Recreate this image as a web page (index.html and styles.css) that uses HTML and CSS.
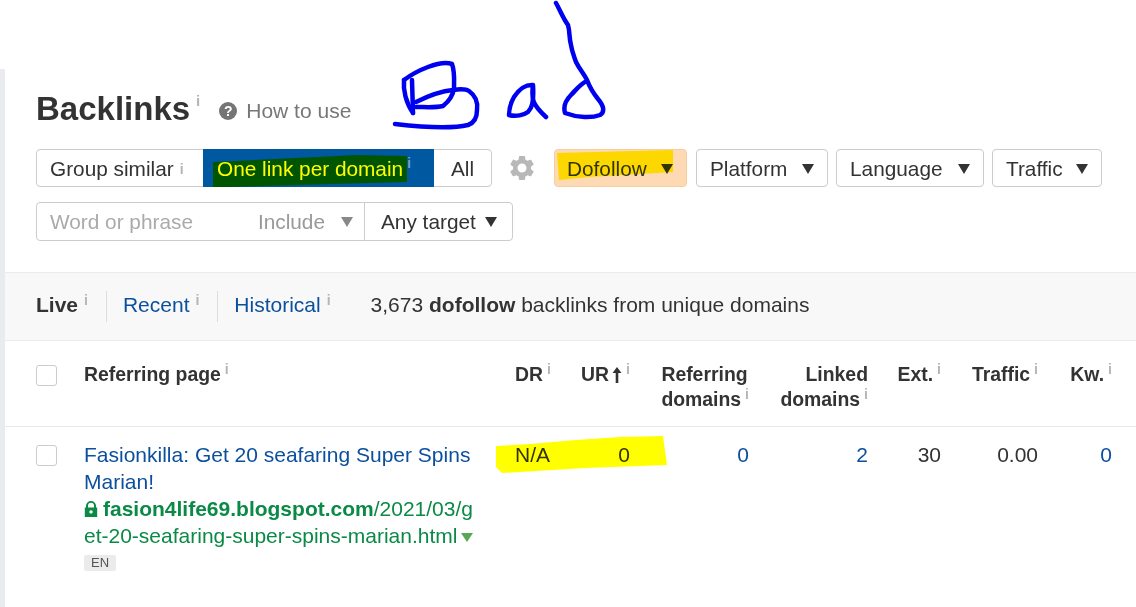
FILE: index.html
```html
<!DOCTYPE html>
<html lang="en">
<head>
<meta charset="utf-8">
<title>Backlinks</title>
<link rel="stylesheet" href="styles.css">
</head>
<body>
<main class="page">
  <header class="head">
    <div class="title-row">
      <h1 class="title">Backlinks</h1><span class="info info-title">i</span>
      <a class="howto"><span class="q">?</span>How to use</a>
    </div>
    <div class="filters">
      <div class="seg">
        <span class="seg-item seg-group">Group similar<span class="info">i</span></span>
        <span class="seg-item seg-active">
          <svg class="green" width="231" height="38" viewBox="0 0 231 38"><polygon points="10,13 154,6 204,7 204,33 26,38 10,38"/></svg>
          <span class="seg-text">One link per domain</span><span class="info info-active">i</span>
        </span>
        <span class="seg-item seg-all">All</span>
      </div>
      <svg class="gear" width="30" height="30" viewBox="0 0 24 24"><path d="M19.14,12.94c0.04-0.3,0.06-0.61,0.06-0.94c0-0.32-0.02-0.64-0.07-0.94l2.03-1.58c0.18-0.14,0.23-0.41,0.12-0.61 l-1.92-3.32c-0.12-0.22-0.37-0.29-0.59-0.22l-2.39,0.96c-0.5-0.38-1.03-0.7-1.62-0.94L14.4,2.81c-0.04-0.24-0.24-0.41-0.48-0.41 h-3.84c-0.24,0-0.43,0.17-0.47,0.41L9.25,5.35C8.66,5.59,8.12,5.92,7.63,6.29L5.24,5.33c-0.22-0.08-0.47,0-0.59,0.22L2.74,8.87 C2.62,9.08,2.66,9.34,2.86,9.48l2.03,1.58C4.84,11.36,4.8,11.69,4.8,12s0.02,0.64,0.07,0.94l-2.03,1.58 c-0.18,0.14-0.23,0.41-0.12,0.61l1.92,3.32c0.12,0.22,0.37,0.29,0.59,0.22l2.39-0.96c0.5,0.38,1.03,0.7,1.62,0.94l0.36,2.54 c0.05,0.24,0.24,0.41,0.48,0.41h3.84c0.24,0,0.44-0.17,0.47-0.41l0.36-2.54c0.59-0.24,1.13-0.56,1.62-0.94l2.39,0.96 c0.22,0.08,0.47,0,0.59-0.22l1.92-3.32c0.12-0.22,0.07-0.47-0.12-0.61L19.14,12.94z M12,15.6c-1.98,0-3.6-1.62-3.6-3.6 s1.62-3.6,3.6-3.6s3.6,1.62,3.6,3.6S13.98,15.6,12,15.6z"/></svg>
      <span class="drop drop-do">Dofollow<i class="tri"></i></span>
      <span class="drop drop-pl">Platform<i class="tri"></i></span>
      <span class="drop drop-la">Language<i class="tri"></i></span>
      <span class="drop drop-tr">Traffic<i class="tri"></i></span>
    </div>
    <div class="search">
      <span class="search-input"><span class="placeholder">Word or phrase</span><span class="include">Include<i class="tri tri-grey"></i></span></span>
      <span class="search-target">Any target<i class="tri tri-near"></i></span>
    </div>
  </header>

  <section class="band">
    <strong class="tab-live">Live<span class="info">i</span></strong>
    <span class="sep"></span>
    <a class="tab">Recent<span class="info">i</span></a>
    <span class="sep"></span>
    <a class="tab">Historical<span class="info">i</span></a>
    <span class="summary">3,673 <b>dofollow</b> backlinks from unique domains</span>
  </section>

  <section class="table">
    <div class="row row-head">
      <span class="cell"><span class="check"></span></span>
      <span class="cell th-page">Referring page<span class="info">i</span></span>
      <span class="cell th-left">DR<span class="info">i</span></span>
      <span class="cell th">UR<svg class="up" width="10" height="16" viewBox="0 0 10 16"><path d="M5 0 9.5 6H6.3V16H3.7V6H.5Z"/></svg><span class="info">i</span></span>
      <span class="cell th th-ref">Referring<br>domains<span class="info">i</span></span>
      <span class="cell th">Linked<br>domains<span class="info">i</span></span>
      <span class="cell th">Ext.<span class="info">i</span></span>
      <span class="cell th">Traffic<span class="info">i</span></span>
      <span class="cell th">Kw.<span class="info">i</span></span>
    </div>
    <div class="row row-body">
      <span class="cell"><span class="check"></span></span>
      <div class="cell page-cell">
        <a class="page-link">Fasionkilla: Get 20 seafaring Super Spins Marian!</a>
        <div class="url"><svg class="lock" width="14" height="16" viewBox="0 0 14 16"><path d="M2 6.5V4.8a5 4.8 0 0 1 10 0V6.5h1.2V16H.8V6.5ZM4 6.5H10V4.8a3 3 0 0 0-6 0ZM7 9.2a1.7 1.7 0 1 0 .01 0Z" fill-rule="evenodd"/></svg><b>fasion4life69.blogspot.com</b>/2021/03/get-20-seafaring-super-spins-marian.html<i class="tri-url"></i></div>
        <span class="lang">EN</span>
      </div>
      <span class="cell td-left">N/A</span>
      <span class="cell td">0</span>
      <a class="cell td link">0</a>
      <a class="cell td link">2</a>
      <span class="cell td">30</span>
      <span class="cell td">0.00</span>
      <a class="cell td link">0</a>
    </div>
  </section>
</main>

<svg class="ink" width="1136" height="607" viewBox="0 0 1136 607">
  <polygon class="marker-gold" points="557,153 673,150 673,172 589,177 559,180"/>
  <polygon class="marker-yellow" points="496,446 530,444 576,440 620,437 663,436 667,465 585,468 502,473 496,467"/>
  <g class="pen">
    <path d="M404 80C412 74 420 70 428 67S446 62 452 64C455 72 454 82 454 88C453 96 448 102 443 106C435 108 425 107 416 107"/>
    <path d="M404 80C403 90 406 103 413 113"/>
    <path d="M412 80 413 113"/>
    <path d="M416 102C428 96 442 91 453 90C460 89 466 89 469 91C476 96 478 103 477 110C477 118 474 123 468 125C455 128 430 128 395 124"/>
    <path d="M532 85C525 85 520 88 514 97C510 104 509 110 509 115C516 117 524 115 528 112C532 108 534 102 533 85C531 100 533 105 546 117"/>
    <path d="M556 3C560 10 563 18 568 25C570 32 569 38 571 45C572 52 574 56 576 62C580 70 584 74 587 80C590 88 594 94 598 99C604 106 605 112 600 115C592 118 578 118 565 113C563 106 566 100 571 95C576 90 580 84 587 81"/>
  </g>
</svg>
</body>
</html>
```
FILE: styles.css
```css
* { box-sizing: border-box; }
html, body { margin: 0; padding: 0; background: #fff; }
body { font-family: "Liberation Sans", Arial, sans-serif; font-size: 21px; color: #333; overflow: hidden; height: 607px; position: relative; }

.page { margin-top: 69px; min-height: 538px; border-left: 5px solid #e9ebee; }
.info { font-size: 14px; color: #b5b5b5; font-weight: 700; vertical-align: 7px; margin-left: 6px; line-height: 0; }

.head { padding: 20px 0 31px 31px; height: 203px; }
.title-row { display: flex; align-items: center; height: 40px; }
.title { margin: 0; font-size: 33px; line-height: 40px; font-weight: 700; color: #333; }
.info-title { font-size: 15px; margin-left: 6px; align-self: flex-start; line-height: 24px; vertical-align: 0; }
.howto { display: flex; align-items: center; margin-left: 19px; color: #777; font-size: 21px; padding-top: 4px; }
.q { width: 18px; height: 18px; border-radius: 50%; background: #757575; color: #fff; font-size: 14px; font-weight: 700; line-height: 18px; text-align: center; margin-right: 9px; }

.filters { display: flex; align-items: center; margin-top: 20px; height: 38px; font-size: 20.8px; }
.seg { display: flex; height: 38px; width: 456px; border: 1px solid #ccc; border-radius: 4px; }
.seg-item { display: flex; align-items: center; height: 100%; padding-top: 1px; }
.seg-group { width: 166px; padding-left: 13px; }
.seg-active { position: relative; width: 231px; height: 38px; margin-top: -1px; padding-left: 14px; padding-top: 2px; background: #0059a0; }
.green { position: absolute; left: 0; top: 0; fill: #005500; }
.seg-text { position: relative; color: #ff0; }
.info-active { position: relative; color: #6ea0c8; margin-left: 4px; margin-top: -12px; }
.seg-all { flex: 1; justify-content: center; }
.gear { fill: #b8b8b8; margin: 0 17px 0 15px; }
.drop { display: flex; align-items: center; justify-content: space-between; height: 38px; padding: 2px 13px 0 12px; border: 1px solid #ccc; border-radius: 4px; margin-right: 8px; }
.drop-do { width: 133px; background: #fdd9b4; border-color: #f8cd9e; margin-right: 9px; }
.drop-pl { width: 132px; padding-left: 13px; }
.drop-la { width: 148px; padding-left: 13px; }
.drop-tr { width: 110px; padding-left: 13px; }
.tri { display: inline-block; width: 0; height: 0; border-style: solid; border-width: 10px 6px 0; border-color: #333 transparent transparent; }
.tri-grey { border-top-color: #888; margin-left: 16px; }
.tri-near { margin-left: 9px; }

.search { display: flex; margin-top: 15px; height: 39px; width: 477px; border: 1px solid #ccc; border-radius: 4px; font-size: 20.8px; }
.search-input { display: flex; align-items: center; justify-content: space-between; width: 328px; padding: 0 11px 0 13px; border-right: 1px solid #ccc; color: #aaa; }
.include { display: flex; align-items: center; color: #999; }
.search-target { display: flex; align-items: center; padding: 0 0 0 16px; }

.band { display: flex; align-items: center; height: 69px; background: #f8f8f8; border-top: 1px solid #ebebeb; border-bottom: 1px solid #ebebeb; padding: 0 0 4px 31px; }
.tab-live { font-weight: 700; }
.tab { color: #0b4f9e; }
.sep { width: 1px; height: 31px; background: #ddd; margin: 4px 16px 0 18px; }
.summary { margin-left: 40px; }
.summary b { font-weight: 700; }

.row { display: grid; grid-template-columns: 48px 431px 40px 75px 119px 119px 73px 97px 74px; padding-left: 31px; }
.row-head { height: 86px; padding-top: 21px; border-bottom: 1px solid #e8e8e8; font-size: 19.4px; line-height: 25px; font-weight: 700; }
.row-head .info { margin-left: 4px; }
.row-body { padding-top: 14px; line-height: 27px; }
.check { display: block; width: 21px; height: 21px; border: 1px solid #ccc; border-radius: 3px; background: #fff; margin-top: 3px; }
.row-body .check { margin-top: 4px; }
.th, .td { text-align: right; }
.th-ref { justify-self: end; text-align: left; }
.th-left, .td-left { text-align: left; }
.up { fill: #333; margin-left: 3px; vertical-align: -2px; }
.page-cell { width: 392px; }
.page-link { color: #0b4f9e; display: block; }
.url { color: #0a8a46; word-break: break-all; }
.url b { font-weight: 700; }
.lock { fill: #0a8a46; margin-right: 5px; vertical-align: -1px; }
.tri-url { display: inline-block; width: 0; height: 0; border-style: solid; border-width: 9px 6px 0; border-color: #5aa855 transparent transparent; margin-left: 4px; vertical-align: 1px; }
.lang { display: block; width: 32px; height: 16px; margin-top: 6px; border-radius: 2px; background: #ebebeb; color: #555; font-size: 13px; line-height: 16px; text-align: center; }
.link { color: #0b4f9e; }

.ink { position: absolute; left: 0; top: 0; pointer-events: none; }
.marker-gold { fill: #ffd700; mix-blend-mode: darken; }
.marker-yellow { fill: #ffff00; mix-blend-mode: multiply; }
.pen { fill: none; stroke: #0000f0; stroke-width: 4.5; stroke-linecap: round; stroke-linejoin: round; }
```
